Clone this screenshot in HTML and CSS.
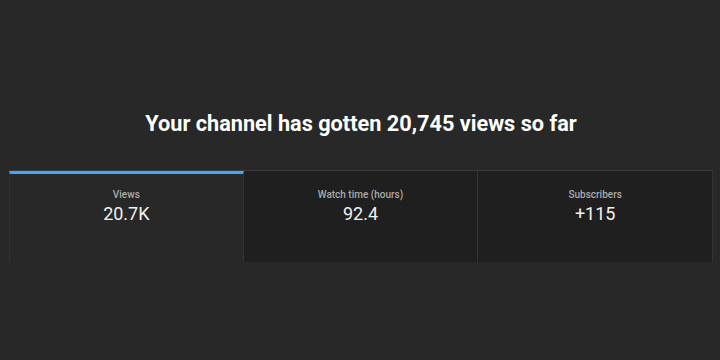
FILE: index.html
```html
<html>
  <head>
    <meta charset="utf-8">
    <title>Channel analytics</title>
    <link rel="stylesheet" href="styles.css">
  </head>
  <body>
    <div class="overview">
      <h1 class="headline">Your channel has gotten 20,745 views so far</h1>
      <div class="metrics">
        <div class="metric selected">
          <div class="metric_label">Views</div>
          <div class="metric_value">20.7K</div>
        </div>
        <div class="metric">
          <div class="metric_label">Watch time (hours)</div>
          <div class="metric_value">92.4</div>
        </div>
        <div class="metric">
          <div class="metric_label">Subscribers</div>
          <div class="metric_value">+115</div>
        </div>
      </div>
    </div>
  </body>
</html>
```

FILE: styles.css
```css
body {
  margin: 0;
  background: #282828;
  font-family: Roboto, "Liberation Sans", sans-serif;
  color: #f1f1f1;
}

.overview {
  margin: 0 7px 0 9px;
  padding-top: 109px;
}

.headline {
  margin: 0 0 31px 0;
  text-align: center;
  font-size: 21.7px;
  font-weight: 700;
  line-height: 30px;
  color: #ffffff;
}

.metrics {
  display: grid;
  grid-template-columns: 1fr 1fr 1fr;
  height: 91px;
  border-top: 1px solid #3a3a3a;
}

.metric {
  background: #1f1f1f;
  border-right: 1px solid #333333;
  text-align: center;
  padding-top: 17px;
  box-sizing: border-box;
}

.metric.selected {
  background: #282828;
  border-top: 3px solid #3ea6ff;
  border-left: 1px solid #333333;
  padding-top: 14px;
}

.metric_label {
  font-size: 10px;
  font-weight: 500;
  line-height: 14px;
  color: #aaaaaa;
}

.metric_value {
  margin-top: 0;
  font-size: 18px;
  line-height: 24px;
  color: #f1f1f1;
}
```
